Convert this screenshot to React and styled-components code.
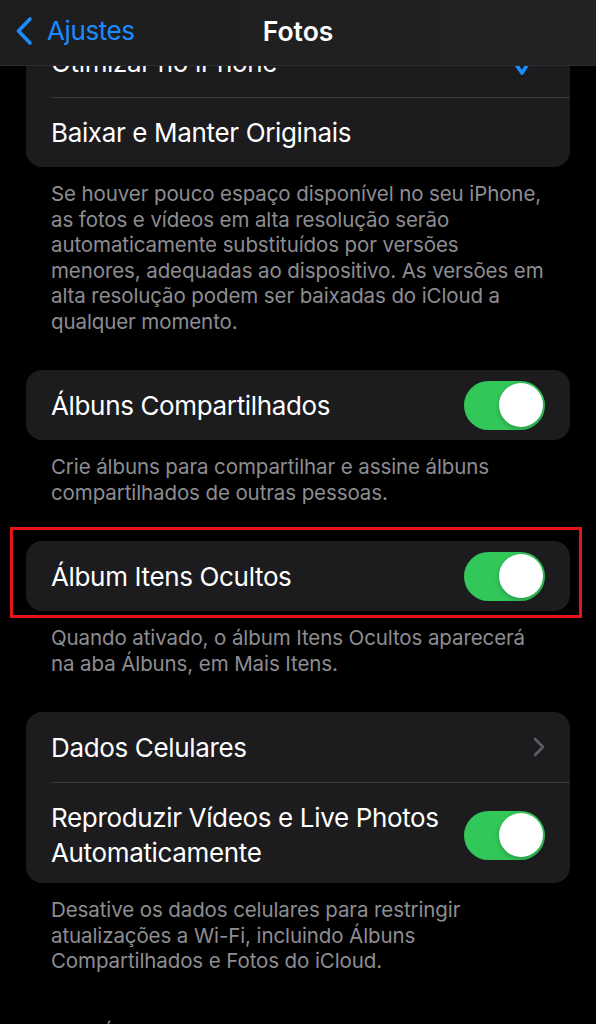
import React from "react";
import styled, { createGlobalStyle } from "styled-components";

const GlobalStyle = createGlobalStyle`
	html, body {
		margin: 0;
		padding: 0;
		background: #000;
	}
	body {
		font-family: Inter, "Noto Sans", sans-serif;
		-webkit-font-smoothing: antialiased;
	}
`;

const Screen = styled.div`
	position: relative;
	width: 596px;
	height: 1024px;
	overflow: hidden;
	background: #000;
	color: #fff;
`;

const NavBar = styled.header`
	position: absolute;
	top: 0;
	left: 0;
	right: 0;
	z-index: 2;
	height: 66px;
	display: grid;
	grid-template-columns: 1fr auto 1fr;
	align-items: center;
	padding: 0 15px 4px;
	box-sizing: border-box;
	background: linear-gradient(90deg, #1d1d1e 0%, #202021 60%, #232324 100%);
	border-bottom: 1px solid #2c2c2e;
`;

const BackButton = styled.button`
	display: flex;
	align-items: center;
	gap: 14px;
	padding: 0;
	border: 0;
	background: none;
	color: #1a8cff;
	font: 400 26px/1 Inter, sans-serif;
	letter-spacing: -0.4px;
	justify-self: start;
	cursor: pointer;
`;

const Title = styled.h1`
	margin: 0;
	font-size: 26.5px;
	font-weight: 600;
	letter-spacing: 0;
	color: #fff;
`;

const Content = styled.main`
	padding: 27px 26px 0;
`;

const Card = styled.div`
	background: #1c1c1e;
	border-radius: 16px;
	overflow: hidden;
`;

const Row = styled.div`
	display: flex;
	padding-left: 25px;
	font-size: 26px;
	letter-spacing: -0.35px;
	color: #fff;
`;

const RowBody = styled.div`
	flex: 1;
	display: flex;
	align-items: center;
	gap: 20px;
	min-height: ${({ $tall }) => ($tall ? "101px" : "70px")};
	padding: ${({ $tall }) => ($tall ? "17px 25px 13px 0" : "0 25px 0 0")};
	box-sizing: border-box;
	border-top: ${({ $divided }) => ($divided ? "1px solid #38383a" : "0")};
`;

const Label = styled.span`
	flex: 1;
	line-height: 35px;
`;

const Footer = styled.p`
	margin: 0;
	padding: 14px 25px 36px;
	font-size: 20.5px;
	line-height: 25.5px;
	letter-spacing: -0.1px;
	color: #8d8d92;
`;

const SectionHeader = styled.h2`
	margin: 0;
	padding: 10px 25px 0;
	font-size: 20.5px;
	font-weight: 400;
	line-height: 25px;
	text-transform: uppercase;
	color: #8d8d92;
`;

const Marked = styled.div`
	position: relative;
`;

const Highlight = styled.div`
	position: absolute;
	top: -14px;
	bottom: -7px;
	left: -16px;
	right: -12px;
	border: 3.5px solid #e5141b;
	pointer-events: none;
`;

const SwitchTrack = styled.span`
	position: relative;
	flex: none;
	width: 81px;
	height: 49px;
	border-radius: 25px;
	background: ${({ $on }) => ($on ? "#32c759" : "#39393d")};
`;

const SwitchKnob = styled.span`
	position: absolute;
	top: 2.5px;
	left: ${({ $on }) => ($on ? "34.5px" : "2.5px")};
	width: 44px;
	height: 44px;
	border-radius: 50%;
	background: #fff;
	box-shadow: 0 2px 5px rgba(0, 0, 0, 0.25);
`;

const CheckIcon = styled.svg`
	flex: none;
	margin-right: 6px;
`;

const Switch = ({ on = true }) => (
	<SwitchTrack $on={on}>
		<SwitchKnob $on={on} />
	</SwitchTrack>
);

const BackChevron = () => (
	<svg width="18" height="30" viewBox="0 0 18 30" fill="none">
		<path d="M15 3 L3.5 15 L15 27" stroke="currentColor" strokeWidth="3.6" strokeLinecap="round" strokeLinejoin="round" />
	</svg>
);

const Check = () => (
	<CheckIcon width="26" height="28" viewBox="0 0 26 28" fill="none">
		<path d="M2 15 L9 25 L23 3" stroke="#1a8cff" strokeWidth="3.6" strokeLinecap="round" strokeLinejoin="round" />
	</CheckIcon>
);

const Disclosure = () => (
	<svg width="12" height="20" viewBox="0 0 12 20" fill="none">
		<path d="M2 2 L10 10 L2 18" stroke="#5b5b60" strokeWidth="2.8" strokeLinecap="round" strokeLinejoin="round" />
	</svg>
);

const App = () => {
	return (
		<Screen>
			<GlobalStyle />
			<NavBar>
				<BackButton>
					<BackChevron />
					Ajustes
				</BackButton>
				<Title>Fotos</Title>
			</NavBar>

			<Content>
				<section>
					<Card>
						<Row>
							<RowBody>
								<Label>Otimizar no iPhone</Label>
								<Check />
							</RowBody>
						</Row>
						<Row>
							<RowBody $divided>
								<Label>Baixar e Manter Originais</Label>
							</RowBody>
						</Row>
					</Card>
					<Footer>
						Se houver pouco espaço disponível no seu iPhone,
						<br />
						as fotos e vídeos em alta resolução serão
						<br />
						automaticamente substituídos por versões
						<br />
						menores, adequadas ao dispositivo. As versões em
						<br />
						alta resolução podem ser baixadas do iCloud a
						<br />
						qualquer momento.
					</Footer>
				</section>

				<section>
					<Card>
						<Row>
							<RowBody>
								<Label>Álbuns Compartilhados</Label>
								<Switch />
							</RowBody>
						</Row>
					</Card>
					<Footer>
						Crie álbuns para compartilhar e assine álbuns
						<br />
						compartilhados de outras pessoas.
					</Footer>
				</section>

				<section>
					<Marked>
						<Highlight />
						<Card>
							<Row>
								<RowBody>
									<Label>Álbum Itens Ocultos</Label>
									<Switch />
								</RowBody>
							</Row>
						</Card>
					</Marked>
					<Footer>
						Quando ativado, o álbum Itens Ocultos aparecerá
						<br />
						na aba Álbuns, em Mais Itens.
					</Footer>
				</section>

				<section>
					<Card>
						<Row>
							<RowBody>
								<Label>Dados Celulares</Label>
								<Disclosure />
							</RowBody>
						</Row>
						<Row>
							<RowBody $divided $tall>
								<Label>
									Reproduzir Vídeos e Live Photos
									<br />
									Automaticamente
								</Label>
								<Switch />
							</RowBody>
						</Row>
					</Card>
					<Footer>
						Desative os dados celulares para restringir
						<br />
						atualizações a Wi-Fi, incluindo Álbuns
						<br />
						Compartilhados e Fotos do iCloud.
					</Footer>
				</section>

				<SectionHeader>Memórias</SectionHeader>
			</Content>
		</Screen>
	);
};

export default App;
